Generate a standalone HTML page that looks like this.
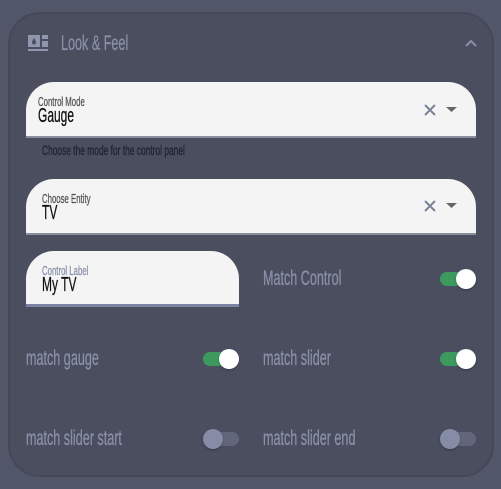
<!DOCTYPE html>
<html><head><style>
*{margin:0;padding:0;box-sizing:border-box}
body{width:501px;height:489px;background:#525669;position:relative;overflow:hidden;font-family:"Liberation Sans",sans-serif}
.card{position:absolute;left:8px;top:12px;width:486px;height:465px;background:#4a4e5f;border:2px solid #444858;border-radius:32px}
.t{position:absolute;white-space:nowrap;transform:scaleX(0.6);transform-origin:left top;display:inline-block;-webkit-text-stroke:0.3px currentColor;line-height:1}
.field{position:absolute;background:#f4f4f4;border-radius:28px 28px 0 0;border-bottom:2px solid #8a8e9c}
.tog{position:absolute;width:36px;height:14px;border-radius:7px}
.tog.on{background:#3d9a5e}
.tog.off{background:#62667a}
.tog::after{content:"";position:absolute;top:-3px;width:20px;height:20px;border-radius:50%;box-shadow:0 1px 2px rgba(0,0,0,.3)}
.tog.on::after{right:0;background:#fff}
.tog.off::after{left:0;background:#868ca6}
.lab{color:#8a90a8;font-size:21px}
</style></head><body>
<div class="card"></div>
<svg style="position:absolute;left:28px;top:35px" width="20" height="18" viewBox="0 0 20 18"><rect x="0" y="0" width="12" height="12" fill="#9096ad"/><path d="M6 3 Q4 6 4 7.5 A2 2 0 0 0 8 7.5 Q8 6 6 3Z" fill="#4a4e5f"/><rect x="14" y="0" width="6" height="4" fill="#9096ad"/><rect x="14" y="6" width="6" height="6" fill="#9096ad"/><rect x="0" y="14" width="20" height="2" fill="#9096ad"/></svg>
<div class="t" style="left:61px;top:33px;font-size:21px;color:#8a90a8">Look &amp; Feel</div>
<svg style="position:absolute;left:464px;top:38px" width="14" height="10"><path d="M2 8 L7 3 L12 8" stroke="#8a90a8" stroke-width="2" fill="none"/></svg>

<div class="field" style="left:26px;top:82px;width:450px;height:56px"></div>
<div class="t" style="left:38px;top:95px;font-size:13px;color:#555">Control Mode</div>
<div class="t" style="left:38px;top:106px;font-size:20px;color:#111">Gauge</div>
<svg style="position:absolute;left:423px;top:103px" width="14" height="14"><path d="M2 2 L12 12 M12 2 L2 12" stroke="#7d8396" stroke-width="2"/></svg>
<svg style="position:absolute;left:446px;top:107px" width="12" height="6"><path d="M0 0 H11 L5.5 5Z" fill="#666"/></svg>
<div class="t" style="left:42px;top:143px;font-size:14px;color:#1f2230">Choose the mode for the control panel</div>

<div class="field" style="left:26px;top:179px;width:450px;height:56px"></div>
<div class="t" style="left:42px;top:192px;font-size:13px;color:#555">Choose Entity</div>
<div class="t" style="left:42px;top:203px;font-size:20px;color:#111">TV</div>
<svg style="position:absolute;left:423px;top:199px" width="14" height="14"><path d="M2 2 L12 12 M12 2 L2 12" stroke="#7d8396" stroke-width="2"/></svg>
<svg style="position:absolute;left:446px;top:203px" width="12" height="6"><path d="M0 0 H11 L5.5 5Z" fill="#666"/></svg>

<div class="field" style="left:26px;top:251px;width:213px;height:56px;border-bottom:3px solid #7d84a3"></div>
<div class="t" style="left:42px;top:264px;font-size:13px;color:#8a90a8">Control Label</div>
<div class="t" style="left:42px;top:275px;font-size:20px;color:#111">My TV</div>

<div class="t lab" style="left:263px;top:268px">Match Control</div>
<div class="tog on" style="left:440px;top:272px"></div>
<div class="t lab" style="left:26px;top:348px">match gauge</div>
<div class="tog on" style="left:203px;top:352px"></div>
<div class="t lab" style="left:263px;top:348px">match slider</div>
<div class="tog on" style="left:440px;top:352px"></div>
<div class="t lab" style="left:26px;top:428px">match slider start</div>
<div class="tog off" style="left:203px;top:432px"></div>
<div class="t lab" style="left:263px;top:428px">match slider end</div>
<div class="tog off" style="left:440px;top:432px"></div>
</body></html>
